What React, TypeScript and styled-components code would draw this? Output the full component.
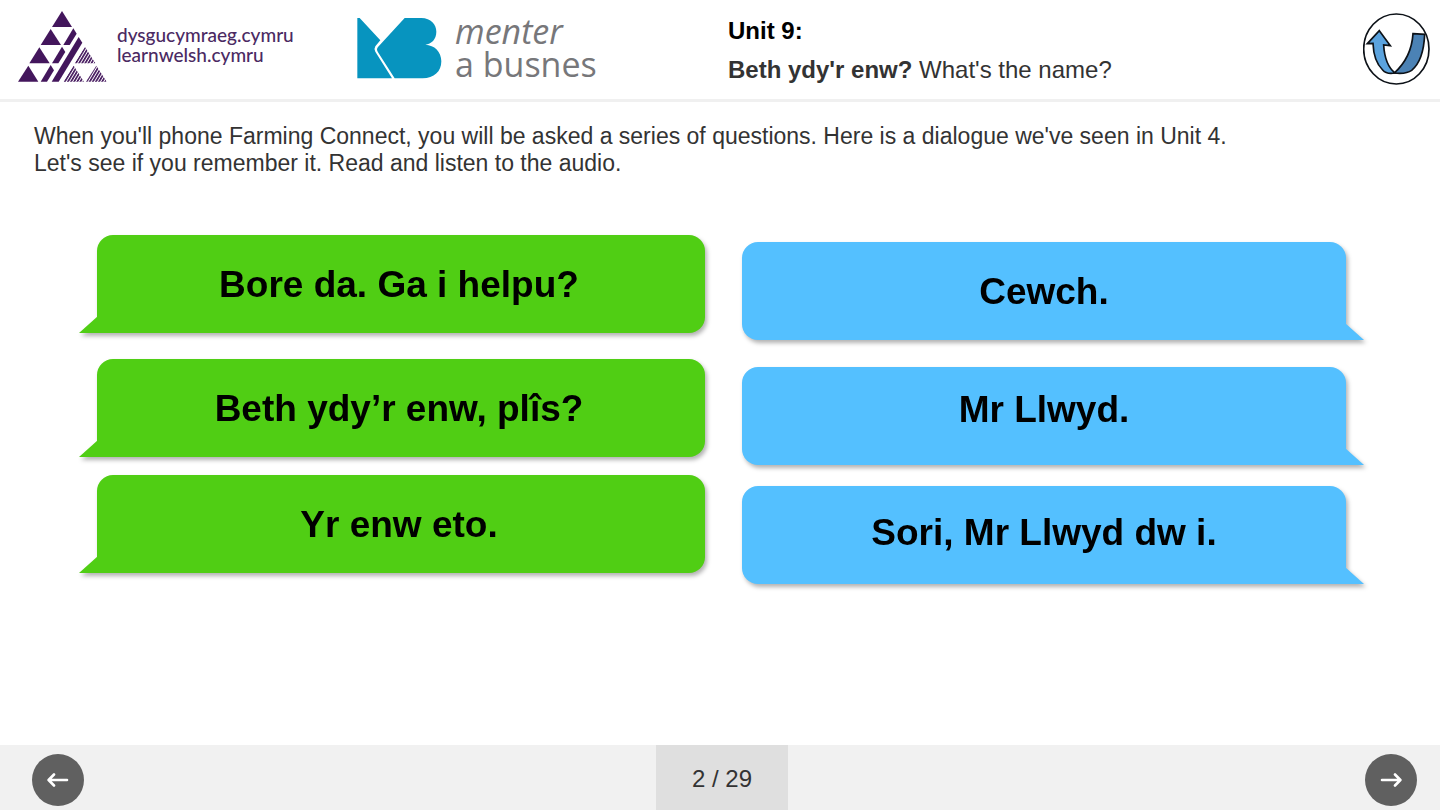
import React from "react";
import styled, { createGlobalStyle } from "styled-components";

const GlobalStyle = createGlobalStyle`
  *, *::before, *::after { box-sizing: border-box; }
  body {
    margin: 0;
    background: #fff;
    color: #333;
    font-family: "Liberation Sans", Arial, sans-serif;
  }
`;

const Page = styled.div`
  display: flex;
  flex-direction: column;
  min-height: 100vh;
`;

const Header = styled.header`
  display: grid;
  grid-template-columns: 340px 371px 1fr auto;
  align-items: start;
  min-height: 102px;
  padding: 10px 10px 0 17px;
  border-bottom: 3px solid #f0f0f0;
`;

const LearnLogo = styled.div`
  display: flex;
  gap: 10px;
`;

const LearnName = styled.div`
  padding-top: 15px;
  color: #4b2a63;
  font-family: Lato, sans-serif;
  font-size: 19px;
  font-weight: 500;
  line-height: 20px;
`;

const MenterLogo = styled.div`
  display: flex;
  gap: 13px;
  padding-top: 8px;
`;

const MenterName = styled.div`
  margin-top: -3px;
  color: #77777a;
  font-family: "Open Sans", sans-serif;
  font-size: 34px;
  font-weight: 400;
  line-height: 33px;
`;

const Titles = styled.div`
  padding-top: 7px;
  font-size: 24px;
  line-height: 28px;
`;

const UnitTitle = styled.h1`
  margin: 0 0 11px;
  color: #000;
  font-size: 24px;
  line-height: 28px;
`;

const Subtitle = styled.p`
  margin: 0;
`;

const BackButton = styled.button`
  display: block;
  margin-top: 3px;
  padding: 0;
  border: 0;
  background: none;
  cursor: pointer;
`;

const Main = styled.main`
  flex: 1;
`;

const Intro = styled.p`
  margin: 0;
  padding: 21px 34px 0;
  font-size: 23px;
  line-height: 27px;
`;

const Dialogue = styled.div`
  display: grid;
  grid-template-columns: 608fr 604fr;
  column-gap: 37px;
  padding: 58px 94px 24px 97px;
`;

const Speaker = styled.div<{ $top?: number }>`
  display: flex;
  flex-direction: column;
  padding-top: ${(p) => p.$top ?? 0}px;
`;

type Side = "left" | "right";

const Bubble = styled.div<{ $side: Side; $gap?: number; $raise?: number }>`
  position: relative;
  display: flex;
  align-items: center;
  justify-content: center;
  min-height: 98px;
  margin-bottom: ${(p) => p.$gap ?? 0}px;
  padding: 2px ${(p) => (p.$side === "left" ? 4 : 0)}px ${(p) => p.$raise ?? 0}px 0;
  border-radius: ${(p) => (p.$side === "left" ? "16px 16px 16px 0" : "16px 16px 0 16px")};
  background: ${(p) => (p.$side === "left" ? "#50ce14" : "#54c0ff")};
  filter: drop-shadow(2px 3px 2px rgba(0, 0, 0, 0.3));
  color: #000;
  font-size: 37px;
  font-weight: 700;
  line-height: 42px;

  &::after {
    content: "";
    position: absolute;
    bottom: 0;
    ${(p) => (p.$side === "left" ? "left: -18px;" : "right: -18px;")}
    width: 19px;
    height: 17px;
    background: inherit;
    clip-path: ${(p) =>
      p.$side === "left"
        ? "polygon(100% 0, 100% 100%, 0 100%)"
        : "polygon(0 0, 100% 100%, 0 100%)"};
  }
`;

const Footer = styled.footer`
  display: grid;
  grid-template-columns: 1fr 132px 1fr;
  align-items: center;
  height: 65px;
  padding: 0 23px 0 27px;
  background: #f1f1f1;
`;

const Counter = styled.div`
  display: flex;
  align-items: center;
  justify-content: center;
  align-self: stretch;
  padding-top: 2px;
  background: #dfdfdf;
  font-size: 24px;
`;

const RoundButton = styled.button<{ $end?: boolean }>`
  display: grid;
  place-items: center;
  justify-self: ${(p) => (p.$end ? "end" : "start")};
  width: 52px;
  height: 52px;
  margin: 4px 0 0 ${(p) => (p.$end ? 0 : 5)}px;
  padding: 0;
  border: 0;
  border-radius: 50%;
  background: #606060;
  cursor: pointer;
`;

const TriangleMark = () => (
  <svg width="90" height="73" viewBox="20 15 270 219" aria-hidden="true">
    <defs>
      <pattern id="hatch" width="8" height="8" patternUnits="userSpaceOnUse" patternTransform="rotate(31)">
        <rect width="5" height="8" fill="#43165c" />
      </pattern>
    </defs>
    <g fill="#43165c">
      <path d="M155 18L185 66H125Z" />
      <path d="M121 72L152 120H91Z" />
      <path d="M87 127L118 175H57Z" />
      <path d="M54 182L84 230H23Z" />
      <path d="M189 70L199 86L178 120H159Z" />
      <path d="M155 125L165 141L144 175H125Z" />
      <path d="M121 180L131 196L110 230H91Z" />
      <path d="M205 96L216 113L145 230H124Z" />
    </g>
    <g fill="url(#hatch)">
      <path d="M224 126L255 175H193Z" />
      <path d="M190 182L221 230H159Z" />
      <path d="M258 182L289 230H227Z" />
    </g>
  </svg>
);

const MenterMark = () => (
  <svg width="85" height="61" viewBox="53 54 255 183" fill="#0794bf" aria-hidden="true">
    <path d="M54 54H61L123 121L108 139Q103 147 108 155L158 235H54Z" />
    <path d="M196 54H246C275 54 291 74 291 95C291 118 276 132 258 134C285 135 306 155 306 184C306 215 284 235 250 235H166L116 157Q110 148 116 141Z" />
  </svg>
);

const ReturnIcon = () => (
  <svg width="67" height="72" viewBox="69 39 201 216" stroke="#0d1218" strokeLinejoin="miter" aria-hidden="true">
    <ellipse cx="169" cy="147" rx="98" ry="105" fill="#fff" strokeWidth="5" />
    <path d="M219 101L254 103C252 150 241 190 215 211C200 222 182 221 163 219C195 190 216 150 219 101Z" fill="#4b82b5" strokeWidth="5" />
    <path d="M118 92L151 137L131 135C133 170 145 203 165 219C150 222 135 218 128 210C107 190 100 160 99 130L82 131Z" fill="#5ba3de" strokeWidth="5" />
  </svg>
);

const ArrowIcon = ({ back = false }: { back?: boolean }) => (
  <svg width="22" height="16" viewBox="0 0 22 16" fill="none" stroke="#fff" strokeWidth="2.6" strokeLinecap="round" strokeLinejoin="round" aria-hidden="true">
    <path d={back ? "M20 8H2M7 2.5L1.6 8L7 13.5" : "M2 8H20M15 2.5L20.4 8L15 13.5"} />
  </svg>
);

export default function App() {
  return (
    <Page>
      <GlobalStyle />
      <Header>
        <LearnLogo>
          <TriangleMark />
          <LearnName>
            dysgucymraeg.cymru
            <br />
            learnwelsh.cymru
          </LearnName>
        </LearnLogo>
        <MenterLogo>
          <MenterMark />
          <MenterName>
            <em>menter</em>
            <br />a busnes
          </MenterName>
        </MenterLogo>
        <Titles>
          <UnitTitle>Unit 9:</UnitTitle>
          <Subtitle>
            <strong>Beth ydy'r enw?</strong> What's the name?
          </Subtitle>
        </Titles>
        <BackButton aria-label="Back to menu">
          <ReturnIcon />
        </BackButton>
      </Header>
      <Main>
        <Intro>
          When you'll phone Farming Connect, you will be asked a series of questions. Here is a dialogue we've seen in
          Unit 4.
          <br />
          Let's see if you remember it. Read and listen to the audio.
        </Intro>
        <Dialogue>
          <Speaker>
            <Bubble $side="left" $gap={26}>Bore da. Ga i helpu?</Bubble>
            <Bubble $side="left" $gap={18}>Beth ydy’r enw, plîs?</Bubble>
            <Bubble $side="left">Yr enw eto.</Bubble>
          </Speaker>
          <Speaker $top={7}>
            <Bubble $side="right" $gap={27}>Cewch.</Bubble>
            <Bubble $side="right" $gap={21} $raise={14}>Mr Llwyd.</Bubble>
            <Bubble $side="right" $raise={6}>Sori, Mr Llwyd dw i.</Bubble>
          </Speaker>
        </Dialogue>
      </Main>
      <Footer>
        <RoundButton aria-label="Previous page">
          <ArrowIcon back />
        </RoundButton>
        <Counter>2 / 29</Counter>
        <RoundButton $end aria-label="Next page">
          <ArrowIcon />
        </RoundButton>
      </Footer>
    </Page>
  );
}
